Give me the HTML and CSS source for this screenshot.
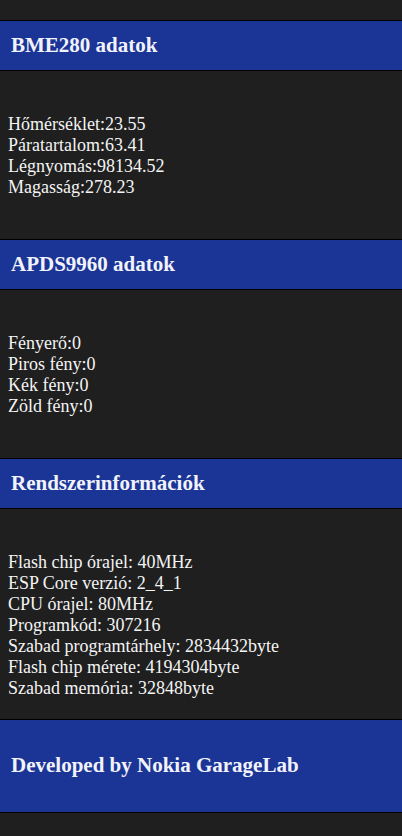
FILE: index.html
```html
<!DOCTYPE html>
<html lang="hu">
<head>
<meta charset="utf-8">
<title>Nokia GarageLab</title>
<link rel="stylesheet" href="styles.css">
</head>
<body>
<div class="page">
  <div class="bar">BME280 adatok</div>
  <div class="content">
    <div>Hőmérséklet:23.55</div>
    <div>Páratartalom:63.41</div>
    <div>Légnyomás:98134.52</div>
    <div>Magasság:278.23</div>
    <br>
  </div>
  <div class="bar">APDS9960 adatok</div>
  <div class="content">
    <div>Fényerő:0</div>
    <div>Piros fény:0</div>
    <div>Kék fény:0</div>
    <div>Zöld fény:0</div>
    <br>
  </div>
  <div class="bar">Rendszerinformációk</div>
  <div class="content">
    <div>Flash chip órajel: 40MHz</div>
    <div>ESP Core verzió: 2_4_1</div>
    <div>CPU órajel: 80MHz</div>
    <div>Programkód: 307216</div>
    <div>Szabad programtárhely: 2834432byte</div>
    <div>Flash chip mérete: 4194304byte</div>
    <div>Szabad memória: 32848byte</div>
  </div>
  <div class="bar footer">Developed by Nokia GarageLab</div>
</div>
</body>
</html>
```
FILE: styles.css
```css
html, body {
  margin: 0;
  padding: 0;
  background: #1f1f1f;
}
body {
  font-family: "Liberation Serif", "Times New Roman", serif;
  color: #f4f4f4;
}
.page {
  display: flex;
  flex-direction: column;
  padding: 20px 0 24px;
}
.bar {
  background: #1a3596;
  border-top: 1px solid #000;
  border-bottom: 1px solid #000;
  color: #f2f2fa;
  font-weight: bold;
  font-size: 21px;
  line-height: 25px;
  padding: 12px 11px;
}
.footer {
  padding: 33px 11px 34px;
}
.content {
  font-size: 18px;
  line-height: 21px;
  padding: 43px 8px 20px;
}
```
